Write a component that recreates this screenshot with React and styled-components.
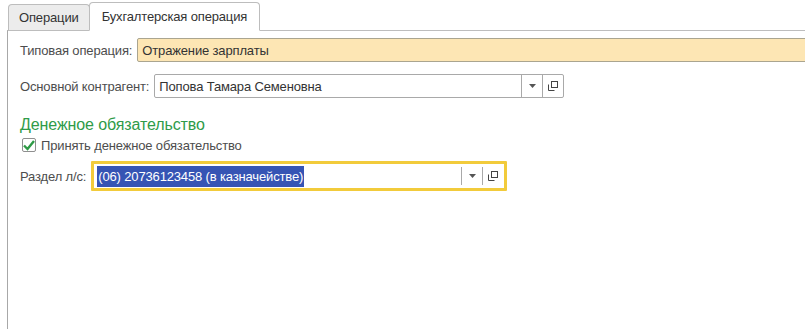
import React from "react";
import styled, { createGlobalStyle } from "styled-components";

const Global = createGlobalStyle`
  html, body {
    margin: 0;
    padding: 0;
    background: #ffffff;
    font-family: Arial, "Liberation Sans", sans-serif;
    font-size: 13px;
    letter-spacing: -0.15px;
    color: #4d4d4d;
  }
  * { box-sizing: border-box; }
`;

const Page = styled.div`
  width: 805px;
  height: 329px;
  padding: 1px 0 0 7px;
  display: flex;
  flex-direction: column;
  overflow: hidden;
`;

const TabBar = styled.div`
  display: flex;
  align-items: flex-end;
  height: 29px;
  padding-left: 1px;
`;

const Tab = styled.div`
  height: ${(p) => (p.active ? "29px" : "26px")};
  padding: 0 ${(p) => (p.active ? "12px" : "10px")};
  display: flex;
  align-items: center;
  background: ${(p) => (p.active ? "#ffffff" : "#ececec")};
  border: 1px solid #bdbdbd;
  border-bottom: ${(p) => (p.active ? "1px solid #ffffff" : "none")};
  border-radius: 4px 4px 0 0;
  margin-left: ${(p) => (p.active ? "-1px" : "0")};
  margin-bottom: ${(p) => (p.active ? "-1px" : "0")};
  color: #333333;
  position: relative;
  z-index: ${(p) => (p.active ? 1 : 0)};
`;

const Panel = styled.div`
  flex: 1;
  border-top: 1px solid #bdbdbd;
  border-left: 1px solid #a8a8a8;
  padding: 7px 0 0 12px;
  display: flex;
  flex-direction: column;
`;

const Row = styled.div`
  display: flex;
  align-items: center;
  height: ${(p) => p.h || 24}px;
  margin-top: ${(p) => p.mt || 0}px;
`;

const Label = styled.span`
  color: #4d4d4d;
  margin-right: 5px;
  white-space: nowrap;
`;

const Field = styled.div`
  display: flex;
  align-items: stretch;
  height: 24px;
  width: ${(p) => p.w};
  flex: ${(p) => (p.grow ? "1" : "none")};
  margin-right: ${(p) => (p.grow ? "-10px" : "0")};
  background: ${(p) => p.bg || "#ffffff"};
  border: 1px solid ${(p) => p.border || "#a9a9a9"};
  border-radius: 2px;
  ${(p) =>
    p.focus &&
    `
    height: 30px;
    border: 3px solid #f2cb3b;
    border-radius: 1px;
    padding: 1px;
  `}
`;

const Value = styled.div`
  flex: 1;
  display: flex;
  align-items: center;
  padding-left: 4px;
  color: #333333;
  white-space: nowrap;
  overflow: hidden;
`;

const Selected = styled.span`
  background: #3654b4;
  color: #ffffff;
  padding: 3px 1px;
  margin-left: -2px;
`;

const Btn = styled.div`
  width: ${(p) => p.w || 21}px;
  display: flex;
  align-items: center;
  justify-content: center;
  border-left: 1px solid #a9a9a9;
  margin: ${(p) => (p.inset ? "2px 0" : "0")};
`;

const Section = styled.div`
  color: #2f9b49;
  font-size: 16px;
  letter-spacing: -0.1px;
  margin-top: 17px;
  height: 20px;
  display: flex;
  align-items: center;
`;

const Check = styled.div`
  display: flex;
  align-items: center;
  height: 18px;
  margin: 1px 0 0 2px;
  gap: 5px;
  color: #4d4d4d;
`;

const Box = styled.div`
  width: 14px;
  height: 14px;
  border: 1px solid #8f8f8f;
  border-radius: 2px;
  background: #ffffff;
  display: flex;
  align-items: center;
  justify-content: center;
`;

const Arrow = () => (
  <svg width="7" height="4" viewBox="0 0 7 4">
    <path d="M0 0 H7 L3.5 4 Z" fill="#555" />
  </svg>
);

const OpenIcon = () => (
  <svg width="10" height="10" viewBox="0 0 10 10" fill="none" stroke="#444" strokeWidth="1">
    <rect x="3.5" y="0.5" width="6" height="6" />
    <path d="M0.5 3.5 V9.5 H6.5" />
  </svg>
);

const Tick = () => (
  <svg width="12" height="11" viewBox="0 0 12 11">
    <path d="M1 5.5 L4.5 9 L11 1" fill="none" stroke="#2e9a46" strokeWidth="2.4" />
  </svg>
);

export default function App() {
  return (
    <>
      <Global />
      <Page>
        <TabBar>
          <Tab>Операции</Tab>
          <Tab active>Бухгалтерская операция</Tab>
        </TabBar>
        <Panel>
          <Row>
            <Label>Типовая операция:</Label>
            <Field grow bg="#fde6b4" border="#aaa590">
              <Value>Отражение зарплаты</Value>
            </Field>
          </Row>
          <Row mt={12}>
            <Label>Основной контрагент:</Label>
            <Field w="410px">
              <Value>Попова Тамара Семеновна</Value>
              <Btn><Arrow /></Btn>
              <Btn><OpenIcon /></Btn>
            </Field>
          </Row>
          <Section>Денежное обязательство</Section>
          <Check>
            <Box><Tick /></Box>
            Принять денежное обязательство
          </Check>
          <Row h={30} mt={7}>
            <Label>Раздел л/с:</Label>
            <Field w="416px" focus>
              <Value><Selected>(06) 20736123458 (в казначействе)</Selected></Value>
              <Btn inset><Arrow /></Btn>
              <Btn inset><OpenIcon /></Btn>
            </Field>
          </Row>
        </Panel>
      </Page>
    </>
  );
}
